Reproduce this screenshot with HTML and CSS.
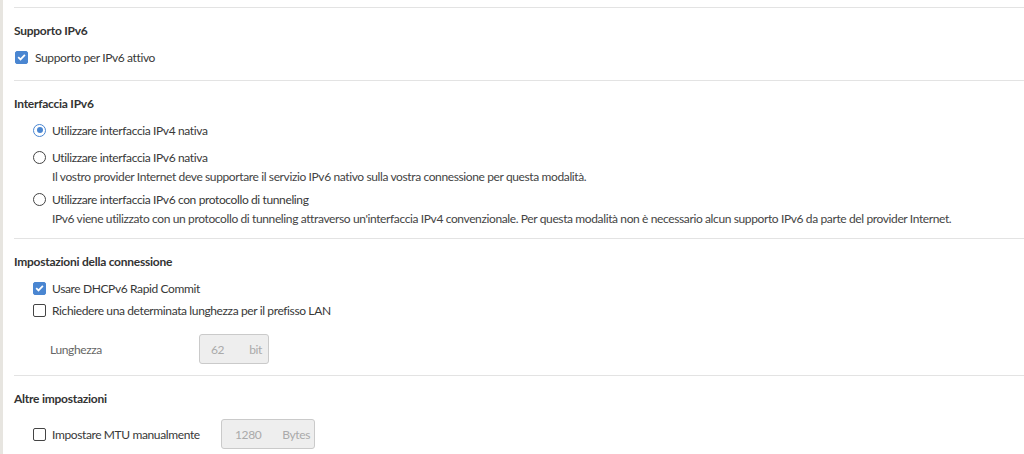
FILE: index.html
```html
<!DOCTYPE html>
<html lang="it">
<head>
    <meta charset="UTF-8">
    <title>IPv6</title>
    <link rel="stylesheet" href="styles.css">
</head>
<body>
    <div class="page">
        <div class="content">
            <div class="section first">
                <h3>Supporto IPv6</h3>
                <label class="option flush">
                    <span class="box checked"><svg viewBox="0 0 12 12"><path d="M2.4 6.1 L4.9 8.6 L9.7 3.6" /></svg></span>
                    <span>Supporto per IPv6 attivo</span>
                </label>
            </div>

            <div class="section">
                <h3>Interfaccia IPv6</h3>
                <label class="option">
                    <span class="radio checked"></span>
                    <span>Utilizzare interfaccia IPv4 nativa</span>
                </label>
                <label class="option spaced">
                    <span class="radio"></span>
                    <span>Utilizzare interfaccia IPv6 nativa</span>
                </label>
                <p class="hint">Il vostro provider Internet deve supportare il servizio IPv6 nativo sulla vostra connessione per questa modalità.</p>
                <label class="option">
                    <span class="radio"></span>
                    <span>Utilizzare interfaccia IPv6 con protocollo di tunneling</span>
                </label>
                <p class="hint">IPv6 viene utilizzato con un protocollo di tunneling attraverso un'interfaccia IPv4 convenzionale. Per questa modalità non è necessario alcun supporto IPv6 da parte del provider Internet.</p>
            </div>

            <div class="section">
                <h3>Impostazioni della connessione</h3>
                <label class="option">
                    <span class="box checked"><svg viewBox="0 0 12 12"><path d="M2.4 6.1 L4.9 8.6 L9.7 3.6" /></svg></span>
                    <span>Usare DHCPv6 Rapid Commit</span>
                </label>
                <label class="option">
                    <span class="box"></span>
                    <span>Richiedere una determinata lunghezza per il prefisso LAN</span>
                </label>
                <div class="field-row">
                    <span class="field-label">Lunghezza</span>
                    <span class="unit-input short"><span>62</span><span>bit</span></span>
                </div>
            </div>

            <div class="section">
                <h3>Altre impostazioni</h3>
                <div class="option mtu">
                    <span class="box"></span>
                    <span class="mtu-label">Impostare MTU manualmente</span>
                    <span class="unit-input wide"><span>1280</span><span>Bytes</span></span>
                </div>
            </div>
        </div>
    </div>
</body>
</html>
```

FILE: styles.css
```css
* {
    margin: 0;
    padding: 0;
    box-sizing: border-box;
}

body {
    font-family: 'Lato', 'Liberation Sans', sans-serif;
    font-size: 12px;
    letter-spacing: -0.38px;
    color: #383838;
    background-color: #fff;
}

/* Page with the thin strip on the left */
.page {
    border-left: 3px solid #e7e5e0;
    height: 454px;
    overflow: hidden;
}

.content {
    padding-left: 11px;
    padding-top: 7px;
}

.section {
    border-top: 1px solid #e3e3e3;
    padding-top: 15px;
    padding-bottom: 11px;
}

.section.first {
    padding-bottom: 12px;
}

h3 {
    font-size: 12px;
    font-weight: bold;
    letter-spacing: -0.25px;
    color: #333;
    line-height: 16px;
    margin-bottom: 7px;
}

/* Checkbox / radio rows */
.option {
    display: flex;
    align-items: center;
    height: 22px;
    padding-left: 19px;
}

.option.flush {
    padding-left: 1px;
}

.option.spaced {
    margin-top: 5px;
}

.box,
.radio {
    width: 13px;
    height: 13px;
    border: 1.5px solid #444;
    flex-shrink: 0;
    display: flex;
    align-items: center;
    justify-content: center;
    margin-right: 6px;
}

.option.flush .box {
    margin-right: 7px;
}

.box {
    border-radius: 2px;
}

.box.checked {
    background-color: #4a86d1;
    border-color: #4a86d1;
}

.box svg {
    width: 12px;
    height: 12px;
    fill: none;
    stroke: #fff;
    stroke-width: 1.9;
}

.radio {
    border-radius: 50%;
}

.radio.checked {
    border-color: #4a86d1;
}

.radio.checked::after {
    content: "";
    width: 6px;
    height: 6px;
    border-radius: 50%;
    background-color: #4a86d1;
}

.hint {
    padding-left: 38px;
    line-height: 18px;
    margin-bottom: 2px;
    color: #444;
    white-space: nowrap;
}

.hint:last-child {
    margin-bottom: -1px;
}

/* Inputs with unit */
.field-row {
    display: flex;
    align-items: center;
    padding-left: 36px;
    margin-top: 13px;
}

.field-label {
    width: 149px;
    color: #666;
}

.unit-input {
    display: flex;
    justify-content: space-between;
    align-items: center;
    height: 30px;
    background-color: #eeeeee;
    border: 1px solid #cacaca;
    border-radius: 3px;
    color: #aaa;
    padding: 0 6px 0 11px;
}

.unit-input.short {
    width: 70px;
}

.unit-input.wide {
    width: 94px;
    padding-left: 13px;
    padding-right: 4px;
}

.mtu {
    height: 30px;
    margin-top: 12px;
}

.mtu-label {
    width: 169px;
}
```
